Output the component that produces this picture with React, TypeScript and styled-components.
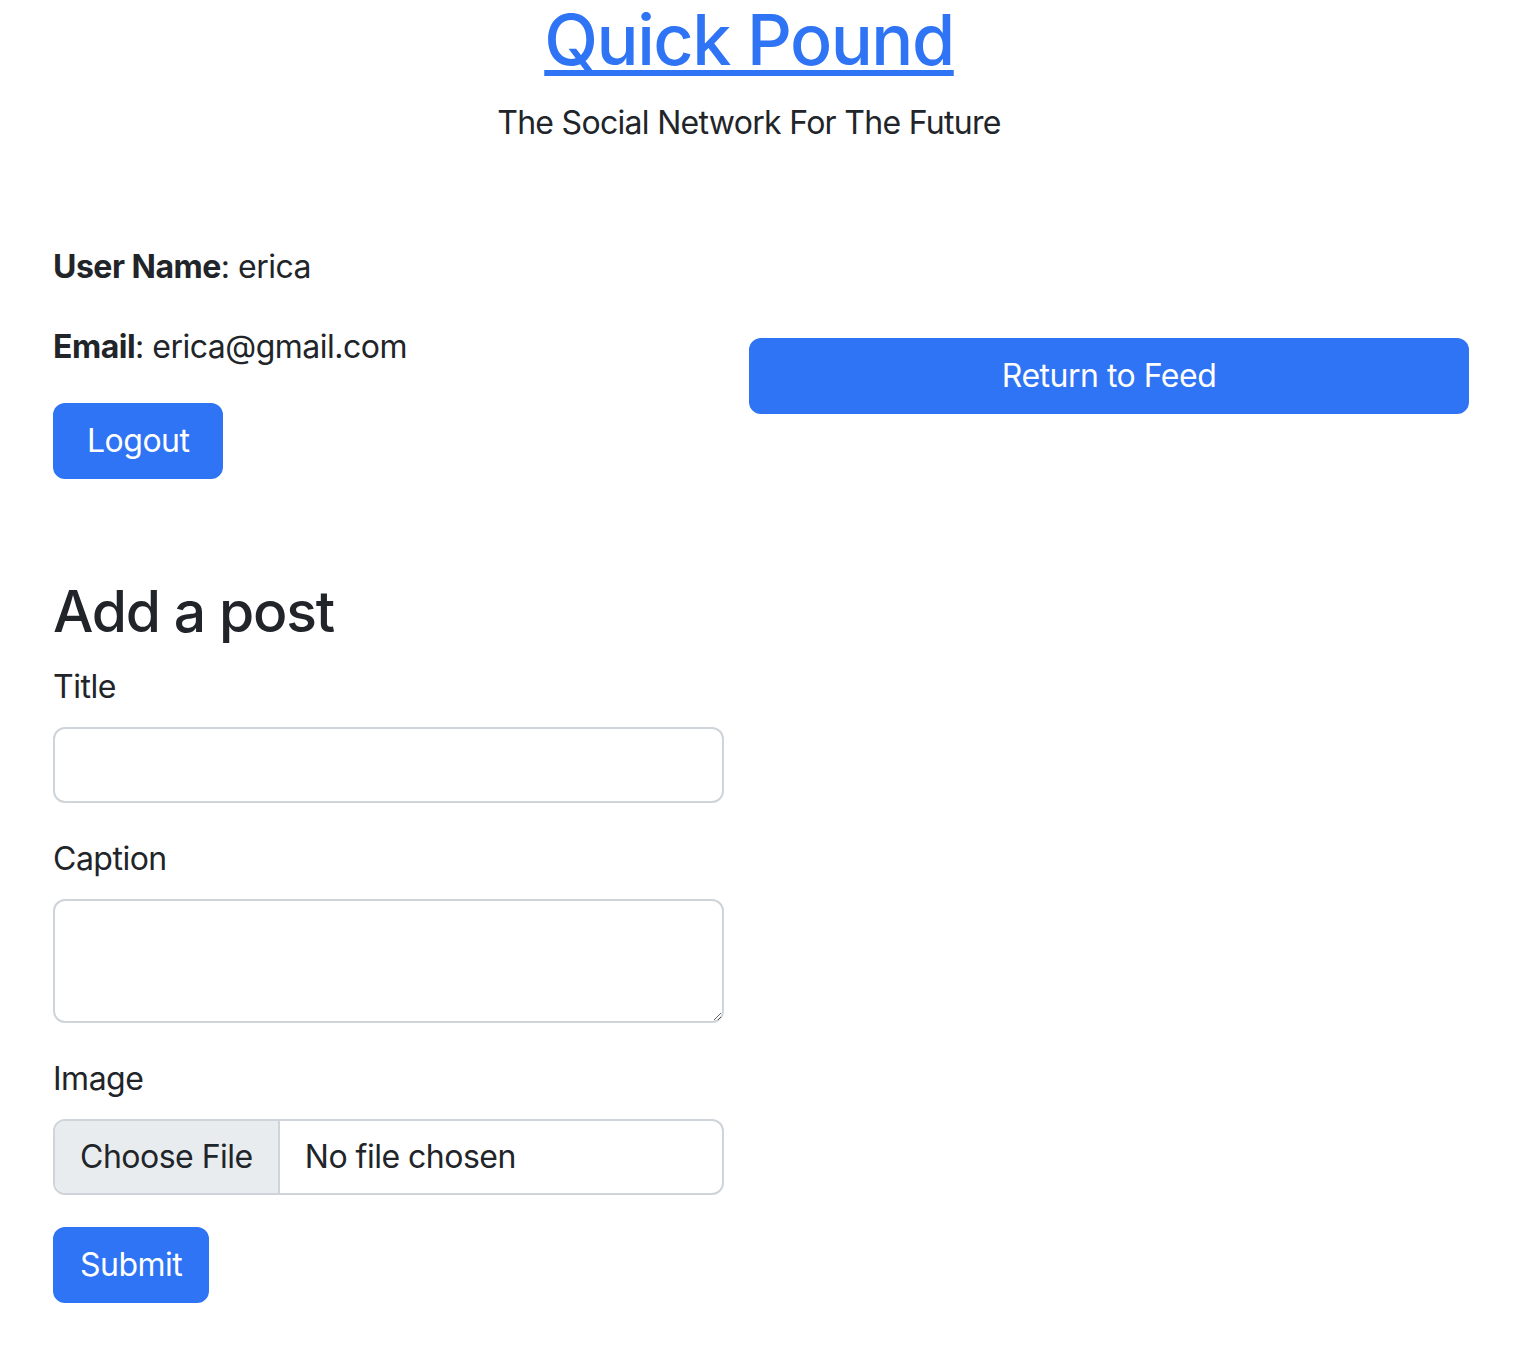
import React from "react";
import styled, { createGlobalStyle } from "styled-components";

const GlobalStyle = createGlobalStyle`
	body {
		margin: 0;
		background: #fff;
		color: #212529;
		font-family: Inter, "Noto Sans", sans-serif;
		font-size: 32px;
		line-height: 48px;
		letter-spacing: -0.5px;
	}
	* { box-sizing: border-box; }
`;

const Page = styled.main`
	padding: 0 57px 40px 53px;
`;

const Header = styled.header`
	text-align: center;
	margin: 0 24px 96px 0;
`;

const TitleLink = styled.a`
	display: inline-block;
	font-size: 70px;
	line-height: 80px;
	font-weight: 500;
	color: #2f74f4;
	letter-spacing: -1.5px;
	text-decoration: underline;
	text-decoration-thickness: 6px;
	text-underline-offset: 5px;
`;

const Tagline = styled.p`
	margin: 19px 0 0;
	letter-spacing: -0.7px;
`;

const ProfileRow = styled.section`
	display: flex;
	gap: 25px;
`;

const ProfileCol = styled.div`
	width: 671px;
`;

const FeedCol = styled.div`
	flex: 1;
	padding-top: 95px;
`;

const InfoLine = styled.p`
	margin: 0 0 32px;

	strong {
		font-weight: 700;
	}
`;

const Button = styled.button<{ $block?: boolean; $pad?: number }>`
	display: ${p => (p.$block ? "block" : "inline-block")};
	width: ${p => (p.$block ? "100%" : "auto")};
	height: 76px;
	padding: 0 ${p => p.$pad ?? 32}px;
	border: 2px solid #2f74f4;
	border-radius: 12px;
	background: #2f74f4;
	color: #fff;
	font-family: inherit;
	font-size: 32px;
	line-height: 48px;
	letter-spacing: inherit;
	cursor: pointer;
`;

const PostForm = styled.form`
	width: 671px;
	margin-top: 98px;
`;

const FormTitle = styled.h2`
	margin: 0 0 16px;
	font-size: 57px;
	line-height: 70px;
	font-weight: 500;
	letter-spacing: -1.2px;
`;

const Field = styled.div`
	margin-bottom: 32px;
`;

const Label = styled.label`
	display: block;
	margin-bottom: 16px;
`;

const TextInput = styled.input`
	display: block;
	width: 100%;
	height: 76px;
	padding: 12px 24px;
	border: 2px solid #ced4da;
	border-radius: 12px;
	font-family: inherit;
	font-size: 32px;
	color: #212529;
`;

const TextArea = styled.textarea`
	display: block;
	width: 100%;
	height: 124px;
	padding: 12px 24px;
	border: 2px solid #ced4da;
	border-radius: 12px;
	font-family: inherit;
	font-size: 32px;
	color: #212529;
	resize: vertical;
`;

const FileBox = styled.label`
	display: flex;
	align-items: center;
	height: 76px;
	border: 2px solid #ced4da;
	border-radius: 12px;
	overflow: hidden;
	cursor: pointer;

	input {
		display: none;
	}
`;

const FileButton = styled.span`
	display: flex;
	align-items: center;
	height: 100%;
	padding: 0 25px;
	background: #e9ecef;
	border-right: 2px solid #ced4da;
`;

const FileName = styled.span`
	padding-left: 25px;
`;

const App = () => {
	return (
		<>
			<GlobalStyle />
			<Page>
				<Header>
					<TitleLink href="#">Quick Pound</TitleLink>
					<Tagline>The Social Network For The Future</Tagline>
				</Header>

				<ProfileRow>
					<ProfileCol>
						<InfoLine><strong>User Name</strong>: erica</InfoLine>
						<InfoLine><strong>Email</strong>: erica@gmail.com</InfoLine>
						<Button type="button">Logout</Button>
					</ProfileCol>
					<FeedCol>
						<Button type="button" $block>Return to Feed</Button>
					</FeedCol>
				</ProfileRow>

				<PostForm onSubmit={e => e.preventDefault()}>
					<FormTitle>Add a post</FormTitle>
					<Field>
						<Label htmlFor="title">Title</Label>
						<TextInput id="title" type="text" />
					</Field>
					<Field>
						<Label htmlFor="caption">Caption</Label>
						<TextArea id="caption" />
					</Field>
					<Field>
						<Label htmlFor="image">Image</Label>
						<FileBox>
							<input id="image" type="file" />
							<FileButton>Choose File</FileButton>
							<FileName>No file chosen</FileName>
						</FileBox>
					</Field>
					<Button type="submit" $pad={25}>Submit</Button>
				</PostForm>
			</Page>
		</>
	);
}

export default App;
